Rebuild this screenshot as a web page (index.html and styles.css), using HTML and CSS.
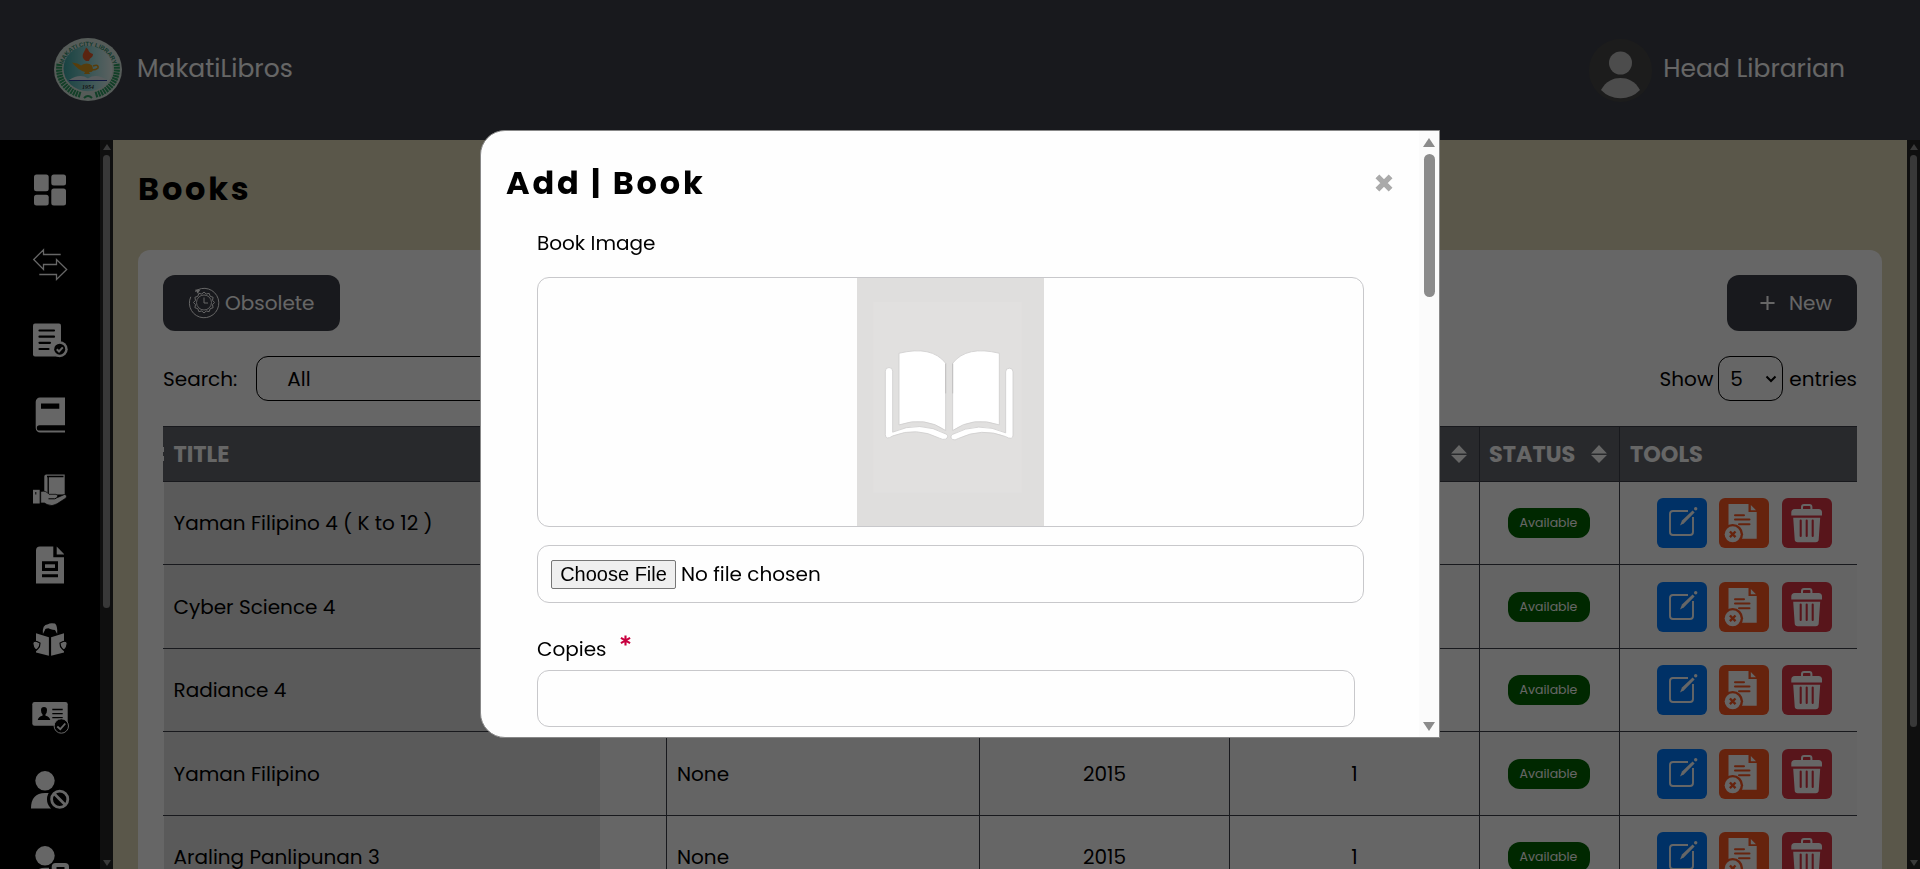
FILE: index.html
```
<!DOCTYPE html>
<html lang="en">
<head>
<meta charset="utf-8">
<title>MakatiLibros</title>
<link rel="stylesheet" href="styles.css">
</head>
<body>
<svg class="defs" width="0" height="0">
  <symbol id="edit" viewBox="0 0 50 50">
    <path d="M31 13H16a3 3 0 0 0-3 3V34a3 3 0 0 0 3 3H33a3 3 0 0 0 3-3V19" fill="none" stroke="#fff" stroke-width="1.9"/>
    <path d="M23 27.4L25 22.6 35.6 12.4 37.6 14.5 27 25.2Z" fill="#fff"/>
    <circle cx="38.7" cy="10.8" r="1.7" fill="#fff"/>
  </symbol>
  <symbol id="archive" viewBox="0 0 50 50">
    <path d="M9.5 6H29.5V14H37.7V40.8H9.5Z" fill="#fff"/>
    <path d="M31.8 7V12.2H37Z" fill="#fff"/>
    <path d="M16 17.3H25M16 21.6H30.5M20 26.3H30.5" stroke="#ff5722" stroke-width="2" stroke-linecap="round"/>
    <circle cx="13.7" cy="36.3" r="10.4" fill="#ff5722"/>
    <circle cx="13.7" cy="36.3" r="8" fill="#fff"/>
    <path d="M10.9 33.5L16.5 39.1M16.5 33.5L10.9 39.1" stroke="#ff5722" stroke-width="2.4"/>
  </symbol>
  <symbol id="trash" viewBox="0 0 50 50">
    <path d="M20 11.5V9a2 2 0 0 1 2-2h5.400a2 2 0 0 1 2 2v2.500" fill="none" stroke="#fff" stroke-width="2"/>
    <path d="M9.300 17.500V14.500a3.500 3.500 0 0 1 3.500-3.500H36.500a3.500 3.500 0 0 1 3.500 3.500V17.500Z" fill="#fff"/>
    <path d="M11.200 19.800H38.200L36.700 41.500a3 3 0 0 1-3 2.800H15.700a3 3 0 0 1-3-2.800Z" fill="#fff"/>
    <path d="M18.700 22.500V38M24.700 22.500V38M30.700 22.500V38" stroke="#dc3545" stroke-width="2.100" stroke-linecap="round"/>
  </symbol>
  <symbol id="sort" viewBox="0 0 15 17"><path d="M0 8L7.500 0L15 8ZM0 9.400L7.500 17L15 9.400Z" fill="#fff"/></symbol>
</svg>

<header class="topbar">
  <div class="brand">
    <svg class="logo" viewBox="0 0 68 63">
      <defs>
        <path id="arc" d="M8.500 31.500A25.500 23.500 0 0 1 59.500 31.500"/>
        <linearGradient id="sky"><stop offset="0" stop-color="#3fa8a6"/><stop offset=".6" stop-color="#9fdcdc"/><stop offset="1" stop-color="#e6f4f1"/></linearGradient>
      </defs>
      <ellipse cx="34" cy="31.500" rx="34" ry="31.500" fill="#d4e3dc"/>
      <ellipse cx="34" cy="30.500" rx="24.500" ry="22.800" fill="url(#sky)"/>
      <text class="seal"><textPath href="#arc" startOffset="50%" text-anchor="middle">MAKATI CITY LIBRARY</textPath></text>
      <path d="M5.500 26C3 41 12 53 27 57M62.500 26C65 41 56 53 41 57" fill="none" stroke="#2f9d63" stroke-width="6" stroke-dasharray="2 .8"/>
      <path d="M30 60q4-4 8 0" fill="none" stroke="#2f9d63" stroke-width="2"/>
      <path d="M32 23C25 18 31 14 32 9.500 36 12 33 14 39 16 39 20 36 19 35 23Z" fill="#e25a2b"/>
      <path d="M18 24.500Q24 25 27 27.500Q33 23.500 38 27.500Q41 35 35 34L36 36H30L31 34Q24 32 18 24.500Z" fill="#d99a1c"/>
      <path d="M39 28Q45 26 44 30Q42 32 38 32" fill="none" stroke="#d99a1c" stroke-width="1.600"/>
      <path d="M15 42Q26 35 34 40.500Q42 35 53 42Z" fill="#dfe9ee"/>
      <path d="M15 42.500H53" stroke="#2d3fa0" stroke-width="1.200"/>
      <text class="year" x="28" y="50.500">1954</text>
    </svg>
    <span>MakatiLibros</span>
  </div>
  <div class="account">
    <svg class="avatar" viewBox="0 0 64 63">
      <ellipse cx="31.500" cy="31.500" rx="31.500" ry="31.500" fill="#474747"/>
      <circle cx="31.500" cy="24" r="11.500" fill="#bdbdbd"/>
      <path d="M12 51C17 42 24 39 31.500 39S46 42 51 51Q43 59.300 31.500 59.300T12 51Z" fill="#bdbdbd"/>
    </svg>
    <span>Head Librarian</span>
  </div>
</header>

<div class="shell">
  <nav class="side">
    <div class="side-icons">
      <svg viewBox="0 0 40 40" fill="#fff"><rect x="4" y="4.500" width="14.700" height="16.800" rx="2.500"/><rect x="4" y="24.800" width="14.700" height="10.700" rx="2.500"/><rect x="21.300" y="4.500" width="14.700" height="11" rx="2.500"/><rect x="21.300" y="18.500" width="14.700" height="17" rx="2.500"/></svg>
      <svg viewBox="0 0 40 40" fill="none" stroke="#fff" stroke-width="1.300"><path d="M30.700 9.500H13.500V4.800L3.700 14.500L13.500 24.500V19.500H26.500V14.500L36.700 24.500L26.500 34.500V29.500H9.300"/></svg>
      <svg viewBox="0 0 40 40"><rect x="3" y="3.500" width="28" height="33" rx="2" fill="#fff"/><path d="M9.500 10.500H24M9.500 16.700H24M9.500 22.800H20M9.500 29H18.500" stroke="#000" stroke-width="2.200" stroke-linecap="round"/><circle cx="29.700" cy="29.200" r="8" fill="#fff"/><circle cx="29.700" cy="29.200" r="5.500"/><path d="M26.800 29.300L29 31.500L32.800 27.300" fill="none" stroke="#fff" stroke-width="2"/></svg>
      <svg viewBox="0 0 40 40"><path d="M35 2.500H10a4.300 4.300 0 0 0-4.300 4.300V33a4.500 4.500 0 0 0 4.500 4.500H35Z" fill="#fff"/><path d="M11 8.500H29.300V13.800H11ZM35 30.200H9.500a2.700 2.700 0 0 0 0 5.400H35Z"/></svg>
      <svg viewBox="0 0 40 40"><path d="M16.500 4.500H34.700V24.500H14.300V6.500a2 2 0 0 1 2-2Z" fill="#fff"/><path d="M17 6.500H33.500M18.200 7V24.500" stroke="#000" stroke-width="1.300"/><path d="M3 19.800H9.700V33.500H3Z" fill="#fff"/><path d="M5.800 22v2.500" stroke="#000"/><path d="M10.700 21.500C15 20.500 17 22 19 24.300H26Q28.500 25 27.500 27.500L34.500 24.500Q37.500 25 36 28L27 33.800Q22 37 17 34.500L14.500 33H10.700Z" fill="#fff" stroke="#000" stroke-width=".7"/><path d="M18.500 28.800H24.500Q27 28.500 27.700 26.500" fill="none" stroke="#000"/></svg>
      <svg viewBox="0 0 40 40"><path d="M10 1.500H23.300V12.300H34V38.500H6V5.500a4 4 0 0 1 4-4ZM26.700 1.500L34 9V9.500H26.700Z" fill="#fff"/><path d="M12 16.200H28V26H12ZM12 29.200H28V32.300H12Z"/><path d="M15 19.300H25V22.900H15Z" fill="#fff"/></svg>
      <svg viewBox="0 0 40 40"><path d="M6 13.200L18.900 17.200V35.800L6 32.500ZM34 13.200L21.100 17.200V35.800L34 32.500Z" fill="#fff"/><path d="M12.900 14Q12 4.500 18 4.300Q20 2.500 25 3.500Q27.800 6 27.200 14L25 10Q20 9.500 18.500 8.300Q15 8.500 15 10Z" fill="#fff"/><path d="M2.800 23.500Q3 20.500 7 21.500L10 23Q10 27 8 28.500L6 30.500Q3 28 2.800 23.500ZM37.200 23.500Q37 20.500 33 21.500L30 23Q30 27 32 28.500L34 30.500Q37 28 37.200 23.500Z" fill="#fff" stroke="#000" stroke-width="1.200"/></svg>
      <svg class="low" viewBox="0 0 40 40"><rect x="2.300" y="5" width="35.400" height="23.700" rx="2.300" fill="#fff"/><path d="M14 10a3 3.300 0 0 1 3 3.300Q17 16 15.500 17.200V18.800Q19.500 19.500 20.300 23H7.700Q8.500 19.500 12.500 18.800V17.200Q11 16 11 13.300A3 3.300 0 0 1 14 10Z"/><path d="M22.300 12.500H32.700M22.300 16.600H32.700M22.300 20.700H32.700" stroke="#000" stroke-width="1.300"/><circle cx="31.300" cy="29" r="7.200" stroke="#fff" stroke-width="1"/><circle cx="31.300" cy="29" r="5.500"/><path d="M27.300 29.500L30.300 32.200L35.300 26.500" fill="none" stroke="#fff" stroke-width="1.800"/></svg>
      <svg viewBox="0 0 40 40"><circle cx="15" cy="10.800" r="9.700" fill="#fff"/><path d="M1 38.500Q1 23 15 23H25L21.500 38.500Z" fill="#fff"/><circle cx="29.700" cy="29.200" r="12.700"/><circle cx="29.700" cy="29.200" r="8.100" fill="none" stroke="#fff" stroke-width="2.800"/><path d="M24 23.500L35.400 34.900" stroke="#fff" stroke-width="2.800"/></svg>
      <svg viewBox="0 0 40 40"><circle cx="15" cy="10.800" r="9.700" fill="#fff"/><path d="M4 27Q9 22.800 15 22.800H19V30H3Z" fill="#fff"/><path d="M21.700 30V22a4 4 0 0 1 4-4H35a4 4 0 0 1 4 4V30Z" fill="#fff"/><rect x="26.500" y="22" width="8" height="4"/></svg>
    </div>
    <div class="bar"><i class="up"></i><i class="thumb side-thumb"></i><i class="down"></i></div>
  </nav>

  <main class="page">
    <h1 class="page-title">Books</h1>
    <section class="card">
      <div class="line">
        <button class="btn obsolete">
          <svg viewBox="0 0 32 32" fill="none" stroke="#fff"><path d="M7 4.500A14.700 14.700 0 1 1 2.800 9.800" stroke-width="1"/><path d="M7.500 3l4 .2-2 3" fill="#fff"/><path d="M16 5l2.200 2 3-.6 1 2.900 2.900 1-.6 3 2 2.200-2 2.200.6 3-2.900 1-1 2.900-3-.6-2.200 2-2.200-2-3 .6-1-2.900-2.900-1 .6-3-2-2.200 2-2.200-.6-3 2.900-1 1-2.900 3 .6Z" stroke-width="1"/><circle cx="16" cy="15.500" r="7.500" stroke-width=".9"/><path d="M16 10.500V16H20"/></svg>
          <span>Obsolete</span>
        </button>
        <button class="btn new"><svg viewBox="0 0 16 16"><path d="M8 .500V15.500M.500 8H15.500" stroke="#fff" stroke-width="2.200"/></svg><span>New</span></button>
      </div>
      <div class="line controls">
        <div class="search"><span>Search:</span><span class="select wide">All</span></div>
        <div class="show"><span>Show</span><span class="select small">5<svg viewBox="0 0 12 8"><path d="M1.500 1.500L6 6L10.500 1.500" fill="none" stroke="#000" stroke-width="2"/></svg></span><span>entries</span></div>
      </div>
      <div class="table">
        <div class="tr head">
          <div class="td title">TITLE</div><div class="td"></div><div class="td"></div><div class="td"></div>
          <div class="td sorted"><svg><use href="#sort"/></svg></div>
          <div class="td sorted"><span>STATUS</span><svg><use href="#sort"/></svg></div>
          <div class="td">TOOLS</div>
        </div>
        <div class="tr"><div class="td title">Yaman Filipino 4 ( K to 12 )</div><div class="td"></div><div class="td none">None</div><div class="td mid">2015</div><div class="td mid">1</div><div class="td mid"><span class="badge">Available</span></div><div class="td tools"><svg class="blue"><use href="#edit"/></svg><svg class="orange"><use href="#archive"/></svg><svg class="red"><use href="#trash"/></svg></div></div>
        <div class="tr"><div class="td title">Cyber Science 4</div><div class="td"></div><div class="td none">None</div><div class="td mid">2015</div><div class="td mid">1</div><div class="td mid"><span class="badge">Available</span></div><div class="td tools"><svg class="blue"><use href="#edit"/></svg><svg class="orange"><use href="#archive"/></svg><svg class="red"><use href="#trash"/></svg></div></div>
        <div class="tr"><div class="td title">Radiance 4</div><div class="td"></div><div class="td none">None</div><div class="td mid">2015</div><div class="td mid">1</div><div class="td mid"><span class="badge">Available</span></div><div class="td tools"><svg class="blue"><use href="#edit"/></svg><svg class="orange"><use href="#archive"/></svg><svg class="red"><use href="#trash"/></svg></div></div>
        <div class="tr"><div class="td title">Yaman Filipino</div><div class="td"></div><div class="td none">None</div><div class="td mid">2015</div><div class="td mid">1</div><div class="td mid"><span class="badge">Available</span></div><div class="td tools"><svg class="blue"><use href="#edit"/></svg><svg class="orange"><use href="#archive"/></svg><svg class="red"><use href="#trash"/></svg></div></div>
        <div class="tr"><div class="td title">Araling Panlipunan 3</div><div class="td"></div><div class="td none">None</div><div class="td mid">2015</div><div class="td mid">1</div><div class="td mid"><span class="badge">Available</span></div><div class="td tools"><svg class="blue"><use href="#edit"/></svg><svg class="orange"><use href="#archive"/></svg><svg class="red"><use href="#trash"/></svg></div></div>
      </div>
    </section>
  </main>
  <div class="bar"><i class="up"></i><i class="thumb main-thumb"></i><i class="down"></i></div>
</div>

<div class="overlay">
  <div class="modal">
    <div class="modal-body">
      <div class="modal-head">
        <h2 class="modal-title">Add | Book</h2>
        <svg class="close" viewBox="0 0 18 18"><path d="M2.400 2.400L15.600 15.600M15.600 2.400L2.400 15.600" stroke="#aaa" stroke-width="5.400"/></svg>
      </div>
      <div class="form">
        <label>Book Image</label>
        <div class="preview">
          <svg viewBox="111 52 561 748" preserveAspectRatio="none">
            <rect x="111" y="52" width="561" height="748" fill="#dfdedd"/>
            <rect x="160" y="124" width="445" height="576" fill="#e1e0df"/>
            <g fill="#fff" stroke="#cfcdcd" stroke-width="2.500">
              <path d="M237 279Q335 255 377 309V512Q315 468 237 495Z"/>
              <path d="M538 279Q440 255 398 309V512Q460 468 538 495Z"/>
              <path d="M196 333a11 11 0 0 1 22 0V517Q300 480 379 523Q388 531 377 538Q369 541 358 535Q290 500 219 528Q196 543 196 524Z"/>
              <path d="M579 335a11 11 0 0 0-22 0V519Q475 482 397 524Q388 532 398 539Q404 543 415 536Q485 502 556 530Q579 543 579 526Z"/>
            </g>
            <path d="M377 310V400M398 310V400" stroke="#b5b3b3" stroke-width="2"/>
          </svg>
        </div>
        <div class="file"><span class="choose">Choose File</span><span>No file chosen</span></div>
        <div class="label-line"><label>Copies</label><svg viewBox="0 0 12 12"><path d="M6 .500V11.500M1 3.200L11 8.800M11 3.200L1 8.800" stroke="#c8003f" stroke-width="2.300"/></svg></div>
        <div class="input"></div>
      </div>
    </div>
    <div class="modal-bar"><i class="m-up"></i><i class="m-thumb"></i><i class="m-down"></i></div>
  </div>
</div>
</body>
</html>
```
FILE: styles.css
```
* { box-sizing: border-box; }
html, body { margin: 0; height: 869px; overflow: hidden; }
body { font: 20px/30px Poppins, Inter, "Open Sans", sans-serif; color: #000; background: #e1d9b9; }
svg { display: block; flex: none; }
.defs { position: absolute; }
h1, h2 { margin: 0; font-size: 32px; font-weight: 700; }

/* header */
.topbar { height: 140px; background: #3e4049; color: #fff; font-size: 25px; display: flex; justify-content: space-between; align-items: center; padding: 0 75px 2px 54px; }
.brand, .account { display: flex; align-items: center; }
.logo { width: 68px; height: 63px; margin-right: 15px; }
.seal { font: 700 6px "Liberation Sans", Arial, sans-serif; fill: #2f8f6f; }
.year { font: italic 700 6px "Liberation Serif", serif; fill: #333; }
.avatar { width: 64px; height: 63px; margin: 2px 10px 0 0; }

/* sidebar and page frame */
.shell { display: flex; height: 729px; }
.side { display: flex; background: #000; }
.side-icons { width: 100px; height: 729px; padding-top: 12px; overflow: hidden; display: flex; flex-direction: column; align-items: center; }
.side-icons svg { width: 40px; height: 40px; margin: 17.500px 0; }
.side-icons svg.low { margin: 20px 0 15px; }
.bar { width: 13px; background: #262626; display: flex; flex-direction: column; align-items: center; padding: 4px 0 3px; }
.up { border: 4px solid transparent; border-top: 0; border-bottom: 6px solid #919191; margin-bottom: 5px; }
.down { border: 4px solid transparent; border-bottom: 0; border-top: 6px solid #919191; margin-top: auto; }
.thumb { width: 7px; border-radius: 4px; background: #8c8c8c; }
.side-thumb { height: 453px; }
.main-thumb { height: 572px; }
.page { flex: 1; padding: 25px 25px 0; overflow: hidden; }
.page-title { line-height: 47px; margin-bottom: 38px; letter-spacing: 2.800px; }
.card { background: #fff; border-radius: 12px; padding: 25px; height: 700px; }
.line { display: flex; justify-content: space-between; align-items: center; margin-bottom: 25px; }
.btn { border: 0; border-radius: 12px; height: 56px; background: #3e4049; color: #fff; font: inherit; display: flex; align-items: center; padding: 0 0 0 25px; }
.obsolete { width: 177px; }
.obsolete svg { width: 32px; height: 32px; margin-right: 5px; }
.new { width: 130px; padding-left: 33px; }
.new svg { width: 15px; height: 16px; margin-right: 14px; }
.controls { height: 45px; }
.search, .show { display: flex; align-items: center; }
.select { border: 1px solid #000; border-radius: 12px; height: 45px; display: flex; align-items: center; }
.wide { width: 400px; margin-left: 19px; padding-left: 30px; }
.small { width: 65px; margin: 0 6px 0 5px; padding: 0 5px 0 11px; justify-content: space-between; }
.small svg { width: 12px; height: 8px; }

/* table */
.table { border-top: 1px solid #3e4049; }
.tr { display: grid; grid-template-columns: 437px 67px 313px 250px 250px 140px 237px; height: 83px; border-bottom: 1px solid #3e4049; }
.tr:nth-child(odd) { height: 84px; background: #fafafa; }
.tr.head { height: 55px; background: #64676f; color: #fff; font-weight: 700; font-size: 22.400px; }
.td { border-right: 1px solid #3e4049; padding: 0 10px; display: flex; align-items: center; }
.td:last-child { border-right: 0; }
.title { border: 0; border-left: 1px solid #fff; background: #e1e1e1; padding-left: 9.500px; }
.head .title { border: 0; padding-left: 10.500px; background: linear-gradient(#fff, #fff) 0 20px / 1px 5px no-repeat, linear-gradient(#fff, #fff) 0 29px / 1px 5px no-repeat; }
.sorted { justify-content: flex-end; padding: 0 12px 0 9px; }
.sorted span { margin-right: auto; }
.sorted svg { width: 16px; height: 18px; margin-bottom: 1px; }
.mid { justify-content: center; padding: 0 9px; }
.badge { height: 30px; width: 82px; margin-right: 2px; border-radius: 12px; background: #006400; color: #fff; font-size: 12.500px; display: flex; align-items: center; justify-content: center; }
.tools { padding-left: 37px; gap: 12px; }
.tools svg { width: 50px; height: 50px; border-radius: 6px; }
.blue { background: #007bff; }
.orange { background: #ff5722; }
.red { background: #dc3545; margin-left: 1px; }

/* modal */
.overlay { position: fixed; inset: 0; background: rgba(0, 0, 0, .6); padding-top: 130px; }
.modal { width: 960px; height: 608px; margin: 0 auto; background: #fefefe; border: 1px solid #888; border-radius: 25px 0 0 25px; overflow: hidden; display: flex; }
.modal-body { flex: 1; padding: 28px 0 0 25px; }
.modal-head { display: flex; justify-content: space-between; align-items: center; height: 48px; padding-right: 26px; }
.modal-title { letter-spacing: 2.800px; line-height: 48px; }
.close { width: 18px; height: 18px; }
.form { padding: 21px 0 0 31px; display: flex; flex-direction: column; align-items: flex-start; }
.preview { width: 827px; height: 250px; margin: 19px 0 18px; border: 1px solid #c8c8cb; border-radius: 12px; display: flex; justify-content: center; }
.preview svg { width: 187px; height: 248px; }
.file { width: 827px; height: 58px; border: 1px solid #c8c8cb; border-radius: 12px; padding-left: 13px; display: flex; align-items: center; }
.choose { width: 125px; height: 29px; border: 1px solid #767676; border-radius: 2px; background: #efefef; font: 20px/27px "Liberation Sans", Arial, sans-serif; text-align: center; margin-right: 5px; }
.label-line { display: flex; margin: 31px 0 6px; height: 30px; }
.label-line svg { width: 11px; height: 11px; margin: 1px 0 0 13px; }
.input { width: 818px; height: 57px; border: 1px solid #c8c8cb; border-radius: 12px; }
.modal-bar { width: 20px; background: #fbfbfb; display: flex; flex-direction: column; align-items: center; padding: 7px 0 6px; }
.m-up { border: 6px solid transparent; border-top: 0; border-bottom: 9px solid #8b8b8b; margin-bottom: 7px; }
.m-thumb { width: 11px; height: 143px; border-radius: 6px; background: #8b8b8b; }
.m-down { border: 6px solid transparent; border-bottom: 0; border-top: 9px solid #8b8b8b; margin-top: auto; }
```
